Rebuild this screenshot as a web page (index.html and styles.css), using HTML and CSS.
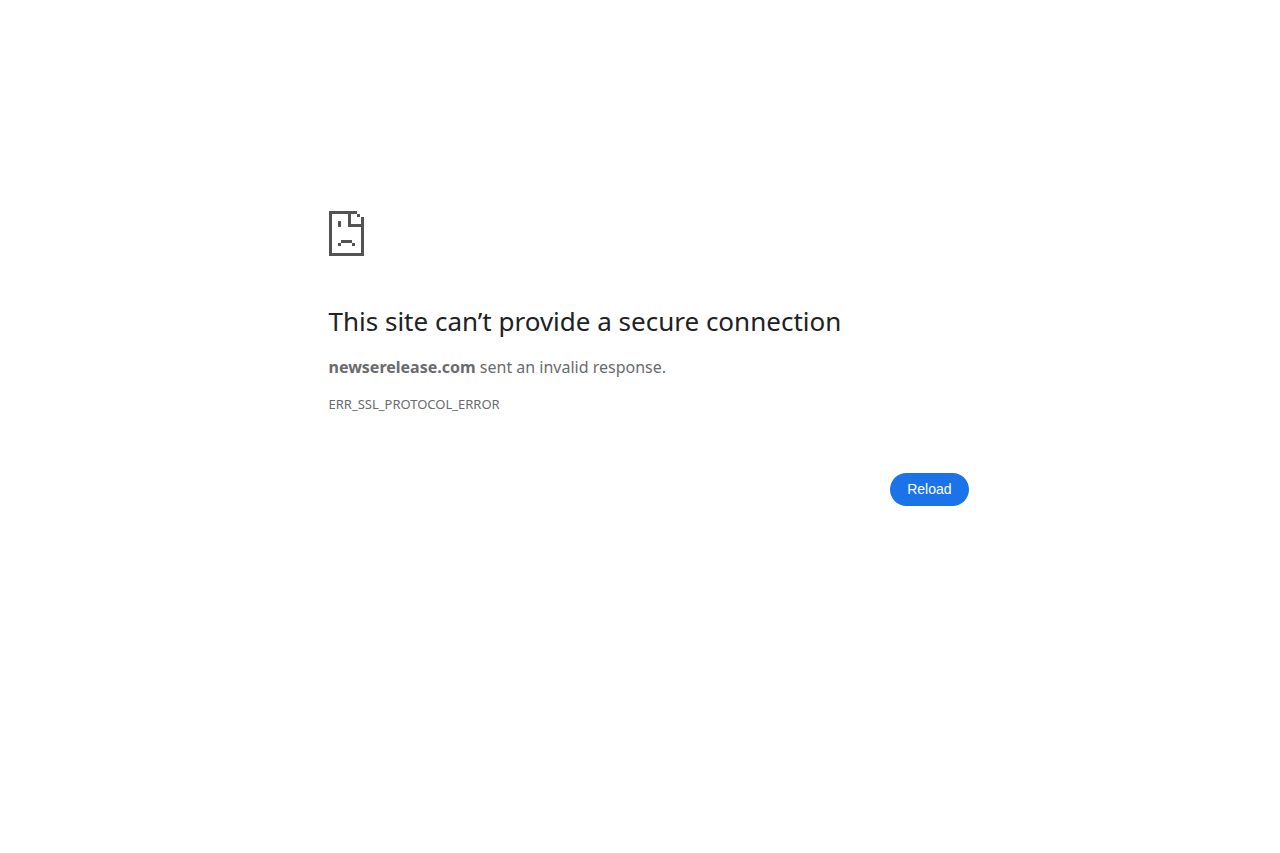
FILE: index.html
```html
<!DOCTYPE html>
<html lang="en">
<head>
<meta charset="utf-8">
<meta name="viewport" content="width=device-width, initial-scale=1">
<title>newserelease.com</title>
<link rel="stylesheet" href="styles.css">
</head>
<body>
<main class="error-page">
  <svg class="error-icon" viewBox="0 0 36 45" shape-rendering="crispEdges" aria-hidden="true">
    <path fill-rule="evenodd" d="M0 0H28V3H22V13H32V6H35V45H0ZM3 3V42H32V16H19V3ZM28 3H31V6H28ZM9 10H12V16H9ZM12 29H23V32H12ZM9 32H12V35H9ZM23 32H26V35H23Z"/>
  </svg>
  <h1 class="title">This site can’t provide a secure connection</h1>
  <p class="summary"><strong>newserelease.com</strong> sent an invalid response.</p>
  <p class="error-code">ERR_SSL_PROTOCOL_ERROR</p>
  <div class="actions">
    <button class="reload" type="button">Reload</button>
  </div>
</main>
</body>
</html>
```
FILE: styles.css
```css
body {
  margin: 0;
  background: #fff;
  color: #696b6e;
  font-family: "Noto Sans", sans-serif;
  font-size: 16px;
  line-height: 24px;
}

.error-page {
  box-sizing: border-box;
  max-width: 657px;
  margin: 0 auto;
  padding: 211px 0 0 17px;
}

.error-icon {
  display: block;
  width: 36px;
  height: 45px;
  fill: #535353;
}

.title {
  margin: 47px 0 16px;
  color: #202124;
  font-size: 26px;
  font-weight: 400;
  line-height: 36px;
}

.summary {
  margin: 0;
}

.error-code {
  margin: 13px 0 0;
  font-size: 13px;
}

.actions {
  display: flex;
  justify-content: flex-end;
  margin-top: 57px;
}

.reload {
  padding: 8px 17px;
  border: 0;
  border-radius: 20px;
  background: #1a73e8;
  color: #fff;
  font: 14px/17px "Liberation Sans", Arial, sans-serif;
  cursor: pointer;
}
```
